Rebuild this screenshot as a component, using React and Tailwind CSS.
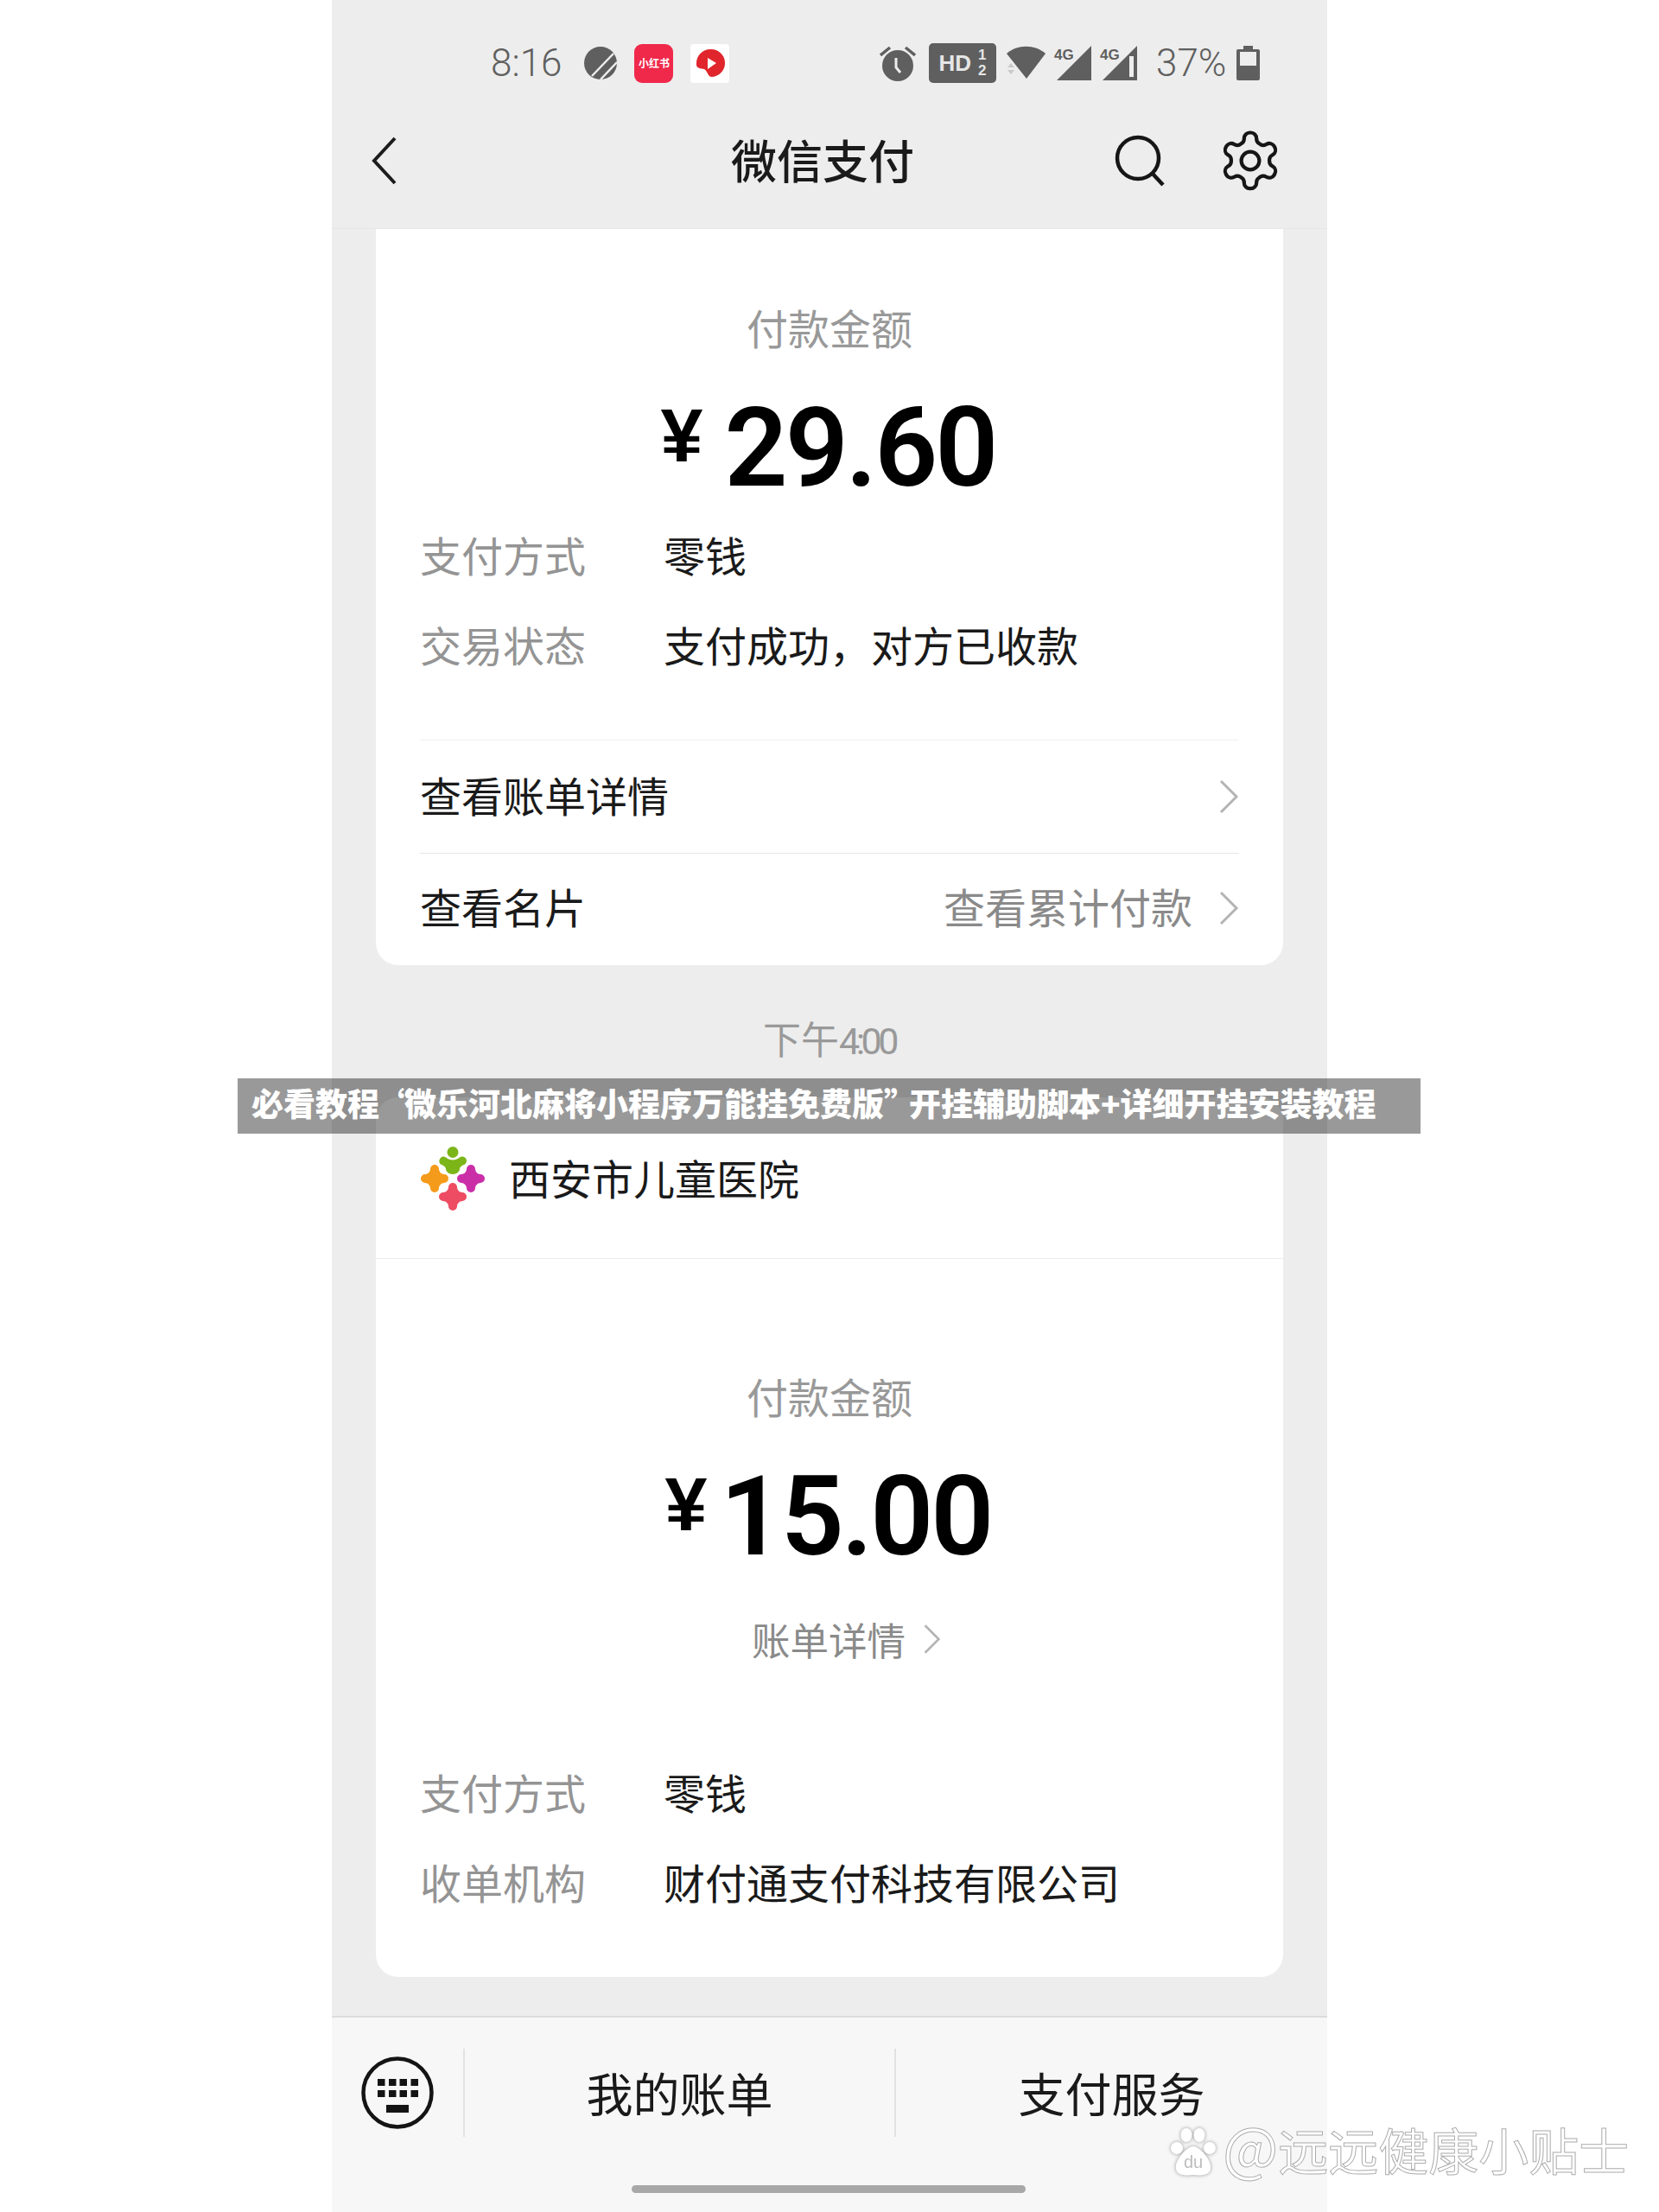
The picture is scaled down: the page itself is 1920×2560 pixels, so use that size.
const cjk = "font-['Noto_Sans_CJK_SC','Noto_Sans',sans-serif]";

function Chevron({ className }) {
  return (
    <svg className={className} viewBox="0 0 24 40" fill="none" stroke="#b4b4b4" strokeWidth="3">
      <path d="M3 2l18 18L3 38" />
    </svg>
  );
}

function StatusBar() {
  return (
    <div className="flex h-[144px] shrink-0 items-center pl-[184px] pr-[78px] pt-[2px] text-[#5f5f5f]">
      <span className="font-['Roboto',sans-serif] text-[44px] font-light leading-none">8:16</span>
      <svg className="ml-[26px] h-[38px] w-[38px]" viewBox="0 0 38 38">
        <circle cx="19" cy="19" r="19" fill="#5f5f5f" />
        <path d="M9 34 34 8M19 38 38 18" stroke="#ededed" strokeWidth="2.5" />
      </svg>
      <span className="ml-[20px] flex h-[45px] w-[45px] items-center justify-center overflow-hidden rounded-[9px] bg-[#f0294b] text-[12px] font-bold leading-none text-white">
        小红书
      </span>
      <span className="ml-[20px] flex h-[45px] w-[45px] items-center justify-center rounded-[4px] bg-white">
        <svg className="h-[36px] w-[36px]" viewBox="0 0 36 36">
          <path d="M18 2a16 16 0 0 1 2 32c-5 0-5-7-9-9-3-1-10 0-9-7A16 16 0 0 1 18 2Z" fill="#e0262c" />
          <path d="M15 12l10 6-10 7Z" fill="#fff" />
        </svg>
      </span>

      <svg className="ml-auto h-[42px] w-[42px]" viewBox="0 0 42 42">
        <circle cx="21" cy="24" r="18" fill="#5f5f5f" />
        <path d="M1 12 12 3M41 12 30 3" stroke="#5f5f5f" strokeWidth="3.5" />
        <path d="M19 15v11l5 6" stroke="#ededed" strokeWidth="3" fill="none" />
      </svg>
      <div className="ml-[15px] flex h-[46px] w-[78px] items-center justify-center gap-[8px] rounded-[5px] bg-[#5f5f5f] font-['Liberation_Sans',sans-serif] font-bold text-[#e6e6e6]">
        <span className="text-[26px] leading-none">HD</span>
        <span className="flex flex-col text-[17px] leading-[18px]">
          <span>1</span>
          <span>2</span>
        </span>
      </div>
      <svg className="ml-[12px] h-[40px] w-[45px]" viewBox="0 0 45 40">
        <path d="M0 9C12-2 33-2 45 9L23 38Z" fill="#5f5f5f" />
        <path d="M1 25l4-5 4 5ZM1 28l4 5 4-5Z" fill="#c9c9c9" />
      </svg>
      <div className="relative ml-[13px] h-[40px] w-[40px]">
        <svg className="h-full w-full" viewBox="0 0 40 40">
          <path d="M40 0V40H0Z" fill="#5f5f5f" />
        </svg>
        <span className="absolute left-[-3px] top-[2px] font-['Liberation_Sans',sans-serif] text-[17px] font-bold leading-none">4G</span>
      </div>
      <div className="relative ml-[13px] h-[40px] w-[40px]">
        <svg className="h-full w-full" viewBox="0 0 40 40">
          <path d="M40 0V40H0Z" fill="#5f5f5f" />
          <path d="M31 12h5V36h-5Z" fill="#ededed" />
        </svg>
        <span className="absolute left-[-3px] top-[2px] font-['Liberation_Sans',sans-serif] text-[17px] font-bold leading-none">4G</span>
      </div>
      <span className="ml-[22px] w-[80px] font-['Roboto',sans-serif] text-[44px] font-light leading-none">37%</span>
      <svg className="ml-[13px] h-[40px] w-[27px]" viewBox="0 0 27 40">
        <path d="M8 0h11v4h6a2 2 0 0 1 2 2v32a2 2 0 0 1-2 2H2a2 2 0 0 1-2-2V6a2 2 0 0 1 2-2h6Z" fill="#5f5f5f" />
        <rect x="4" y="7" width="19" height="16" fill="#ededed" />
      </svg>
    </div>
  );
}

function Header() {
  return (
    <div className="relative flex h-[121px] shrink-0 items-center justify-between border-b border-[#e6e6e6] pb-[36px] pl-[45px] pr-[50px]">
      <svg className="h-[56px] w-[32px]" viewBox="0 0 32 56">
        <path d="M28 2 4 28l24 26" stroke="#1c1c1c" strokeWidth="4" fill="none" />
      </svg>
      <span className={`${cjk} absolute left-[462px] top-0 text-[53px] font-medium leading-[80px] text-[#1a1a1a]`}>微信支付</span>
      <div className="flex items-center gap-[58px]">
        <svg className="h-[60px] w-[60px]" viewBox="0 0 60 60">
          <circle cx="27" cy="27" r="24" stroke="#161616" strokeWidth="4.5" fill="none" />
          <path d="M43 44l13 14" stroke="#161616" strokeWidth="4.5" />
        </svg>
        <svg className="h-[78px] w-[78px]" viewBox="0 0 24 24" fill="none" stroke="#161616" strokeWidth="1.3" strokeLinejoin="round">
          <path d="M12.2 2h-.4a2 2 0 0 0-2 2v.2a2 2 0 0 1-1 1.7l-.4.3a2 2 0 0 1-2 0l-.2-.1a2 2 0 0 0-2.7.7l-.2.4a2 2 0 0 0 .7 2.7l.2.1a2 2 0 0 1 1 1.7v.5a2 2 0 0 1-1 1.7l-.2.1a2 2 0 0 0-.7 2.7l.2.4a2 2 0 0 0 2.7.7l.2-.1a2 2 0 0 1 2 0l.4.3a2 2 0 0 1 1 1.7v.2a2 2 0 0 0 2 2h.4a2 2 0 0 0 2-2v-.2a2 2 0 0 1 1-1.7l.4-.3a2 2 0 0 1 2 0l.2.1a2 2 0 0 0 2.7-.7l.2-.4a2 2 0 0 0-.7-2.7l-.2-.1a2 2 0 0 1-1-1.7v-.5a2 2 0 0 1 1-1.7l.2-.1a2 2 0 0 0 .7-2.7l-.2-.4a2 2 0 0 0-2.7-.7l-.2.1a2 2 0 0 1-2 0l-.4-.3a2 2 0 0 1-1-1.7V4a2 2 0 0 0-2-2Z" />
          <circle cx="12" cy="12" r="3.2" />
        </svg>
      </div>
    </div>
  );
}

function Amount({ value, yenGap }) {
  return (
    <div className="flex items-start justify-center pr-[3px] font-['Roboto',sans-serif] font-semibold leading-none text-black">
      <span className={`${yenGap} mt-[6px] font-['Liberation_Sans',sans-serif] text-[88px] font-bold leading-none`}>¥</span>
      <span className="text-[128px] leading-none tracking-[-3px]">{value}</span>
    </div>
  );
}

function InfoRow({ label, value }) {
  return (
    <div className="flex h-[104px] items-center text-[48px] leading-none">
      <span className="w-[282px] text-[#949494]">{label}</span>
      <span className="text-[#1a1a1a]">{value}</span>
    </div>
  );
}

function PaymentCard() {
  return (
    <section className="mx-[51px] flex h-[852px] shrink-0 flex-col rounded-b-[26px] bg-white px-[51px] pt-[89px]">
      <p className="pl-[378px] text-[48px] leading-none text-[#999]">付款金额</p>
      <div className="mt-[52px]">
        <Amount value="29.60" yenGap="mr-[25px]" />
      </div>
      <div className="mt-[7px]">
        <InfoRow label="支付方式" value="零钱" />
        <InfoRow label="交易状态" value="支付成功，对方已收款" />
      </div>
      <div className="mt-[59px] border-t border-[#efefef]">
        <div className="flex h-[131px] items-center justify-between border-b border-[#e6e6e6] pb-[6px] text-[48px] leading-none text-[#1a1a1a]">
          <span>查看账单详情</span>
          <Chevron className="mt-[6px] h-[40px] w-[24px]" />
        </div>
        <div className="flex h-[127px] items-center justify-between pb-[8px] text-[48px] leading-none text-[#1a1a1a]">
          <span>查看名片</span>
          <span className="flex items-center gap-[30px] text-[#8a8a8a]">
            查看累计付款
            <Chevron className="mt-[6px] h-[40px] w-[24px]" />
          </span>
        </div>
      </div>
    </section>
  );
}

// three rounded crosses and a figure with a head on top
function HospitalLogo() {
  const cross = "M0-16a5 5 0 0 1 5 5c0 3 3 6 6 6a5 5 0 0 1 0 10c-3 0-6 3-6 6a5 5 0 0 1-10 0c0-3-3-6-6-6a5 5 0 0 1 0-10c3 0 6-3 6-6a5 5 0 0 1 5-5Z";
  return (
    <svg className="h-[76px] w-[76px]" viewBox="0 0 76 76">
      <circle cx="38" cy="7.5" r="6.5" fill="#7cb518" />
      <path d="M24 14a5 5 0 0 1 6-.5c5 4 11 4 16 0a5 5 0 0 1 6 8c-3 1-6 3-6 5.5a8 6 0 0 1-16 0c0-2.500-3-4.500-6-5.500a5 5 0 0 1 0-7.500Z" fill="#7cb518" />
      <path d={cross} transform="translate(17 38)" fill="#f59b1b" />
      <path d={cross} transform="translate(59 38)" fill="#cb2fa8" />
      <path d={cross} transform="translate(38 59)" fill="#ee4c63" />
    </svg>
  );
}

function MerchantCard() {
  return (
    <section className="mx-[51px] flex h-[1018px] shrink-0 flex-col rounded-[26px] bg-white">
      <div className="flex h-[187px] shrink-0 items-center gap-[27px] border-b border-[#ececec] px-[51px] pt-[2px]">
        <HospitalLogo />
        <span className="pb-[5px] text-[48px] leading-[64px] text-[#1a1a1a]">西安市儿童医院</span>
      </div>
      <div className="flex flex-1 flex-col px-[51px] pt-[134px]">
        <p className="pl-[378px] text-[48px] leading-none text-[#999]">付款金额</p>
        <div className="mt-[52px]">
          <Amount value="15.00" yenGap="mr-[15px]" />
        </div>
        <div className="mt-[56px] flex items-center pl-[384px] text-[44.500px] leading-none text-[#8a8a8a]">
          账单详情
          <Chevron className="ml-[20px] h-[36px] w-[21px]" />
        </div>
        <div className="mt-[101px]">
          <InfoRow label="支付方式" value="零钱" />
          <InfoRow label="收单机构" value="财付通支付科技有限公司" />
        </div>
      </div>
    </section>
  );
}

function BottomBar() {
  return (
    <div className="relative mt-[45px] flex flex-1 border-t-2 border-[#dcdcdc] bg-[#f7f7f7] pt-[36px]">
      <div className="flex h-[102px] w-[154px] shrink-0 items-center justify-center border-r-2 border-[#e2e2e2]">
        <svg className="h-[86px] w-[86px]" viewBox="0 0 86 86">
          <circle cx="43" cy="43" r="39.500" stroke="#141414" strokeWidth="4.500" fill="none" />
          <g fill="#141414">
            <path d="M20 27h8.500v8H20zM33 27h8.500v8H33zM45.500 27H54v8h-8.500zM58.500 27H67v8h-8.500z" />
            <path d="M20 40h8.500v8H20zM33 40h8.500v8H33zM45.500 40H54v8h-8.500zM58.500 40H67v8h-8.500z" />
            <path d="M30 57h26v9H30z" />
          </g>
        </svg>
      </div>
      <div className="flex h-[102px] w-[499px] shrink-0 items-center justify-center border-r-2 border-[#e2e2e2] text-[54px] leading-none text-[#1a1a1a]">
        我的账单
      </div>
      <div className="flex h-[102px] flex-1 items-center justify-center text-[54px] leading-none text-[#1a1a1a]">
        支付服务
      </div>
      <div className="absolute bottom-[22px] left-[347px] h-[9px] w-[456px] rounded-full bg-[#a8a8a8]" />
    </div>
  );
}

export default function App() {
  return (
    <div className={`${cjk} relative flex h-[2560px] justify-center overflow-hidden bg-white`}>
      <main className="flex w-[1152px] flex-col bg-[#ededed]">
        <StatusBar />
        <Header />
        <PaymentCard />
        <p className="mb-[40px] mt-[56px] h-[57px] shrink-0 pl-[499px] text-[44px] leading-[57px] text-[#999]">
          下午<span className="font-['Roboto',sans-serif] text-[43px] tracking-[-4.500px]">4:00</span>
        </p>
        <MerchantCard />
        <BottomBar />
      </main>

      {/* caption strip across the page */}
      <div className="absolute left-[275px] top-[1248px] flex h-[64px] w-[1369px] items-center bg-black/40 pb-[8px] pl-[16px] text-[37px] font-black leading-none whitespace-nowrap text-white">
        必看教程<span className="tracking-[-8px]">“</span>微乐河北麻将小程序万能挂免费版<span className="tracking-[-8px]">”</span>开挂辅助脚本+详细开挂安装教程
      </div>

      {/* outlined account mark in the corner */}
      <div className="absolute left-[1355px] top-[2462px] flex items-start gap-[8px]">
        <svg className="h-[58px] w-[52px] [filter:drop-shadow(0_0_2px_rgba(0,0,0,0.4))]" viewBox="0 0 52 58" fill="#fff">
          <circle cx="7" cy="24" r="7" />
          <ellipse cx="18" cy="9" rx="6.500" ry="8" />
          <ellipse cx="33" cy="9" rx="6.500" ry="8" />
          <circle cx="45" cy="24" r="7" />
          <path d="M26 22c7 0 22 16 20 26-1 8-12 8-20 7-8 1-19 1-20-7-2-10 13-26 20-26Z" />
          <text x="26" y="47" textAnchor="middle" fontSize="20" fontFamily="Liberation Sans, sans-serif" fill="#bdbdbd">du</text>
        </svg>
        <span className="mt-[-13px] text-[58px] leading-none whitespace-nowrap text-white [-webkit-text-stroke:1px_#adadad]">
          <span className="text-[68px]">@</span>远远健康小贴士
        </span>
      </div>
    </div>
  );
}
